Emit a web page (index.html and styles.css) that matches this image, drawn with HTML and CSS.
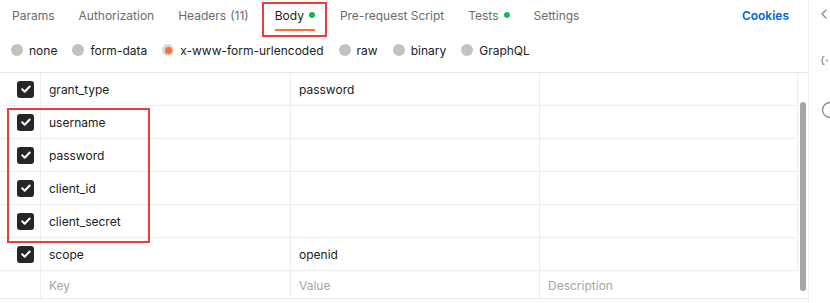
FILE: index.html
```html
<!DOCTYPE html>
<html>
<head>
<meta charset="utf-8">
<link rel="stylesheet" href="styles.css">
</head>
<body>
<div class="app">
  <div class="main">
    <div class="tabs">
      <div class="tab">Params</div>
      <div class="tab">Authorization</div>
      <div class="tab">Headers <span class="count">(11)</span></div>
      <div class="tab active"><span class="tab-inner">Body <span class="dot"></span></span></div>
      <div class="tab">Pre-request Script</div>
      <div class="tab">Tests <span class="dot"></span></div>
      <div class="tab">Settings</div>
      <div class="spacer"></div>
      <div class="cookies">Cookies</div>
    </div>
    <div class="radios">
      <label class="radio"><span class="circle"></span>none</label>
      <label class="radio"><span class="circle"></span>form-data</label>
      <label class="radio"><span class="circle on"></span>x-www-form-urlencoded</label>
      <label class="radio"><span class="circle"></span>raw</label>
      <label class="radio"><span class="circle"></span>binary</label>
      <label class="radio"><span class="circle"></span>GraphQL</label>
    </div>
    <div class="table">
      <div class="row"><div class="cell chk"><span class="box"><svg viewBox="0 0 16 16" width="16" height="16"><path d="M4.2 8.3l2.5 2.4 5-5.2" fill="none" stroke="#fff" stroke-width="2" stroke-linecap="round" stroke-linejoin="round"/></svg></span></div><div class="cell">grant_type</div><div class="cell">password</div><div class="cell last"></div></div>
      <div class="row"><div class="cell chk"><span class="box"><svg viewBox="0 0 16 16" width="16" height="16"><path d="M4.2 8.3l2.5 2.4 5-5.2" fill="none" stroke="#fff" stroke-width="2" stroke-linecap="round" stroke-linejoin="round"/></svg></span></div><div class="cell">username</div><div class="cell"></div><div class="cell last"></div></div>
      <div class="row"><div class="cell chk"><span class="box"><svg viewBox="0 0 16 16" width="16" height="16"><path d="M4.2 8.3l2.5 2.4 5-5.2" fill="none" stroke="#fff" stroke-width="2" stroke-linecap="round" stroke-linejoin="round"/></svg></span></div><div class="cell">password</div><div class="cell"></div><div class="cell last"></div></div>
      <div class="row"><div class="cell chk"><span class="box"><svg viewBox="0 0 16 16" width="16" height="16"><path d="M4.2 8.3l2.5 2.4 5-5.2" fill="none" stroke="#fff" stroke-width="2" stroke-linecap="round" stroke-linejoin="round"/></svg></span></div><div class="cell">client_id</div><div class="cell"></div><div class="cell last"></div></div>
      <div class="row"><div class="cell chk"><span class="box"><svg viewBox="0 0 16 16" width="16" height="16"><path d="M4.2 8.3l2.5 2.4 5-5.2" fill="none" stroke="#fff" stroke-width="2" stroke-linecap="round" stroke-linejoin="round"/></svg></span></div><div class="cell">client_secret</div><div class="cell"></div><div class="cell last"></div></div>
      <div class="row"><div class="cell chk"><span class="box"><svg viewBox="0 0 16 16" width="16" height="16"><path d="M4.2 8.3l2.5 2.4 5-5.2" fill="none" stroke="#fff" stroke-width="2" stroke-linecap="round" stroke-linejoin="round"/></svg></span></div><div class="cell">scope</div><div class="cell">openid</div><div class="cell last"></div></div>
      <div class="row new"><div class="cell chk"></div><div class="cell ph">Key</div><div class="cell ph">Value</div><div class="cell ph noborder">Description</div></div>
      <div class="thumb"></div>
    </div>
    <div class="mark mark-tab"></div>
    <div class="mark mark-rows"></div>
  </div>
  <div class="side">
    <svg width="21" height="130" viewBox="0 0 21 130">
      <path d="M17 10l-4 4 4 4" fill="none" stroke="#8a8a8a" stroke-width="1.3" stroke-linecap="round" stroke-linejoin="round"/>
      <path d="M15 56.5c-1.5 0-1.5 1-1.5 2.5s-.8 1.5-1.5 1.5c.7 0 1.5 0 1.5 1.5s0 2.5 1.5 2.5" fill="none" stroke="#8a8a8a" stroke-width="1.2" stroke-linecap="round"/>
      <circle cx="18" cy="60.5" r="0.9" fill="#8a8a8a"/>
      <circle cx="21" cy="110" r="7.5" fill="none" stroke="#8a8a8a" stroke-width="1.3"/>
    </svg>
  </div>
</div>
</body>
</html>
```
FILE: styles.css
```css
* { box-sizing: border-box; }
html, body { margin: 0; padding: 0; background: #fff; }
body {
  font-family: Inter, "Noto Sans", sans-serif;
  font-size: 12px;
  color: #212121;
  width: 830px;
  height: 303px;
  overflow: hidden;
}
.app { display: flex; height: 303px; }
.main {
  position: relative;
  width: 809px;
  border-right: 1px solid #ededed;
  flex: none;
}
.side { flex: 1; display: flex; justify-content: flex-start; }
.side svg { display: block; }

.tabs {
  display: flex;
  align-items: stretch;
  height: 31px;
}
.tab {
  display: flex;
  align-items: center;
  padding: 0 12px 1px;
  color: #6b6b6b;
  white-space: nowrap;
  gap: 5px;
}
.tab:first-child { padding-left: 12px; }
.tab .count { color: #6b6b6b; margin-left: -1px; }
.tab.active { color: #212121; padding: 0 13px 0 14px; }
.tab-inner {
  display: flex;
  align-items: center;
  gap: 5px;
  height: 31px;
  border-bottom: 2px solid #ff6c37;
  padding-top: 1px;
}
.dot {
  width: 6px;
  height: 6px;
  border-radius: 50%;
  background: #0cbb52;
  display: inline-block;
}
.spacer { flex: 1; }
.cookies {
  display: flex;
  align-items: center;
  padding-right: 19px;
  padding-bottom: 1px;
  color: #0265d2;
  font-weight: 600;
}

.radios {
  display: flex;
  align-items: center;
  height: 22px;
  margin-top: 8px;
  padding-left: 11px;
  gap: 15px;
}
.radio { display: flex; align-items: center; gap: 6px; color: #212121; white-space: nowrap; }
.circle {
  width: 12px;
  height: 12px;
  border-radius: 50%;
  background: #c2c2c2;
  display: inline-block;
  position: relative;
  flex: none;
}
.circle.on { background: #d6d6d6; }
.circle.on::after {
  content: "";
  position: absolute;
  left: 2.5px; top: 2.5px;
  width: 7px; height: 7px;
  border-radius: 50%;
  background: #ff6c37;
}

.table {
  position: relative;
  margin-top: 11px;
  border-top: 1px solid #e6e6e6;
  border-bottom: 1px solid #e6e6e6;
  width: 808px;
}
.row {
  display: grid;
  grid-template-columns: 41px 250px 249px 258px;
  width: 798px;
  height: 33px;
  border-bottom: 1px solid #ededed;
}
.row.new { height: 27px; border-bottom: none; grid-template-columns: 41px 250px 249px 268px; width: 808px; }
.cell {
  display: flex;
  align-items: center;
  padding-left: 8px;
  border-right: 1px solid #ededed;
  white-space: nowrap;
}
.row.new .cell { padding-top: 1px; }
.cell.noborder { border-right: none; }
.cell.chk { padding-left: 17px; }
.ph { color: #a6a6a6; }
.box {
  width: 17px;
  height: 17px;
  border-radius: 3px;
  background: #262626;
  display: flex;
  align-items: center;
  justify-content: center;
}
.box svg { display: block; }

.thumb {
  position: absolute;
  left: 800px;
  top: 29px;
  width: 6px;
  height: 189px;
  border-radius: 3px;
  background: #a6a6a6;
}

.mark {
  position: absolute;
  border: 2px solid #ee3b3b;
}
.mark-tab { left: 262px; top: 2px; width: 65px; height: 35px; }
.mark-rows { left: 7px; top: 108px; width: 143px; height: 135px; }
```
